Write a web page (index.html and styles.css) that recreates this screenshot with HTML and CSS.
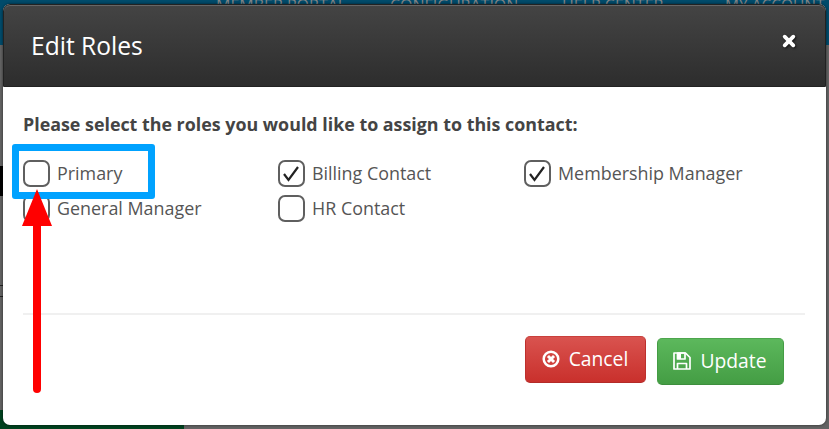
FILE: index.html
```
<!DOCTYPE html>
<html lang="en">
<head>
    <meta charset="UTF-8">
    <meta name="viewport" content="width=device-width, initial-scale=1.0">
    <title>Edit Roles</title>
    <link rel="stylesheet" href="styles.css">
</head>
<body>
    <div class="page">
        <div class="navbar">
            <span class="nav-portal">MEMBER PORTAL</span>
            <span class="nav-config">CONFIGURATION</span>
            <span class="nav-help">HELP CENTER –</span>
            <span class="nav-account">MY ACCOUNT</span>
        </div>
        <div class="page-body">
            <div class="page-block"></div>
            <div class="page-mark"></div>
            <div class="page-button"></div>
        </div>
    </div>

    <div class="modal">
        <div class="modal-header">
            <h1>Edit Roles</h1>
            <button class="close" aria-label="Close">
                <svg width="14" height="14" viewBox="0 0 14 14"><path d="M2.7 2.7l8.600 8.600M11.300 2.700l-8.600 8.600" stroke="#fff" stroke-width="3.8" stroke-linecap="round"/></svg>
            </button>
        </div>
        <div class="modal-body">
            <p class="prompt">Please select the roles you would like to assign to this contact:</p>
            <div class="roles">
                <label class="role"><input type="checkbox"><span>Primary</span></label>
                <label class="role"><input type="checkbox" checked><span>Billing Contact</span></label>
                <label class="role"><input type="checkbox" checked><span>Membership Manager</span></label>
                <label class="role"><input type="checkbox"><span>General Manager</span></label>
                <label class="role"><input type="checkbox"><span>HR Contact</span></label>
            </div>
        </div>
        <div class="modal-footer">
            <button class="btn btn-cancel">
                <svg width="18" height="18" viewBox="0 0 18 18" fill="none" stroke="#fff"><circle cx="9" cy="9" r="7.3" stroke-width="2.5"/><path d="M7 7l4 4M11 7l-4 4" stroke-width="3" stroke-linecap="square"/></svg>
                <span>Cancel</span>
            </button>
            <button class="btn btn-update">
                <svg width="18" height="18" viewBox="0 0 18 18" fill="none" stroke="#fff" stroke-width="1.7" stroke-linejoin="round"><path d="M1 1h11.5L17 5.500V17H1z"/><path d="M4.500 17v-5.500h9V17"/><path d="M4.500 1v6h7.500V1z"/><path d="M5 1h3v6H5z" fill="#fff" stroke="none"/></svg>
                <span>Update</span>
            </button>
        </div>
    </div>

    <div class="highlight"></div>
    <svg class="arrow" width="32" height="206" viewBox="0 0 32 206">
        <path d="M16 0L31 37H1z" fill="#f00"/>
        <path d="M16 30v170" stroke="#f00" stroke-width="8" stroke-linecap="round"/>
    </svg>
</body>
</html>
```
FILE: styles.css
```
* {
    box-sizing: border-box;
}
body {
    margin: 0;
    height: 429px;
    overflow: hidden;
    position: relative;
    font-family: "Open Sans", sans-serif;
    color: #555;
}
.page {
    height: 429px;
    display: flex;
    flex-direction: column;
    background-color: #636363;
}
.navbar {
    height: 45px;
    background-color: #004b6b;
    color: #858585;
    display: grid;
    grid-template-columns: 174px 172px 163px 1fr;
    padding-left: 216px;
    font-size: 16px;
    line-height: 20px;
    white-space: nowrap;
}
.navbar span {
    margin-top: -5px;
}
.nav-account {
    font-size: 15.5px;
}
.page-body {
    flex: 1;
    display: flex;
    flex-direction: column;
    padding-top: 121px;
}
.page-block {
    width: 10px;
    height: 30px;
    background-color: #000;
}
.page-mark {
    width: 3px;
    height: 12px;
    margin-top: 89px;
    border: solid #222;
    border-width: 1px 0;
}
.page-button {
    width: 184px;
    height: 19px;
    margin-top: auto;
    background-color: #00421f;
}
.modal {
    position: absolute;
    top: 4px;
    left: 3px;
    width: 823px;
    height: 421px;
    display: flex;
    flex-direction: column;
    background-color: #fff;
    border-radius: 7px;
    box-shadow: 0 0 3px rgba(0, 0, 0, 0.6);
}
.modal-header {
    height: 83px;
    display: flex;
    align-items: center;
    justify-content: space-between;
    padding: 0 29px 0 27px;
    border: 1px solid #222;
    border-radius: 7px 7px 0 0;
    background: linear-gradient(#444, #2d2d2d);
    box-shadow: inset 0 1px 0 #666;
}
.modal-header h1 {
    margin: 0;
    color: #fff;
    font-size: 24.6px;
    font-weight: 400;
}
.close {
    display: flex;
    margin-bottom: 10px;
    padding: 0;
    border: none;
    background: none;
    filter: drop-shadow(1px 1px 1px #111);
}
.modal-body {
    height: 228px;
    margin: 0 21px 0 20px;
    padding-top: 24px;
    border-bottom: 2px solid #f0f0f0;
}
.prompt {
    margin: 0;
    color: #444;
    font-size: 17.85px;
    font-weight: 700;
    line-height: 26px;
    white-space: nowrap;
}
.roles {
    display: grid;
    grid-template-columns: 255px 246px 1fr;
    grid-auto-rows: 35px;
    margin-top: 19px;
}
.role {
    display: flex;
    align-items: center;
    gap: 7px;
    font-size: 17.9px;
    white-space: nowrap;
}
.role span {
    margin-top: -2px;
}
.role input {
    appearance: none;
    width: 27px;
    height: 27px;
    margin: 0;
    border: 2px solid #5f5f5f;
    border-radius: 7px;
    background-color: #fff;
}
.role input:checked {
    background-image: url('data:image/svg+xml,<svg xmlns="http://www.w3.org/2000/svg" viewBox="0 0 23 23"><path d="M4 12l4.500 6L18 5" fill="none" stroke="%23222" stroke-width="2.200"/></svg>');
}
.modal-footer {
    display: flex;
    justify-content: flex-end;
    align-items: flex-start;
    gap: 11px;
    padding: 21px 42px 0 0;
}
.btn {
    display: flex;
    align-items: center;
    justify-content: center;
    gap: 9px;
    height: 47px;
    padding: 0 1px 0 0;
    border: 1px solid;
    border-radius: 5px;
    color: #fff;
    font-family: inherit;
    font-size: 19.3px;
}
.btn span {
    margin-top: -2px;
}
.btn svg {
    margin-top: -1px;
}
.btn-cancel {
    width: 121px;
    border-color: #c9403c #bd302d #b32b28;
    background: linear-gradient(#d9534f, #c9302c);
}
.btn-update {
    width: 127px;
    margin-top: 2px;
    border-color: #4da64d #449d44 #3d8e3d;
    background: linear-gradient(#5cb85c, #449d44);
}
.highlight {
    position: absolute;
    top: 144px;
    left: 12px;
    width: 143px;
    height: 55px;
    border: 7px solid #00a2ff;
    border-radius: 3px;
}
.arrow {
    position: absolute;
    top: 189px;
    left: 21px;
}
```
